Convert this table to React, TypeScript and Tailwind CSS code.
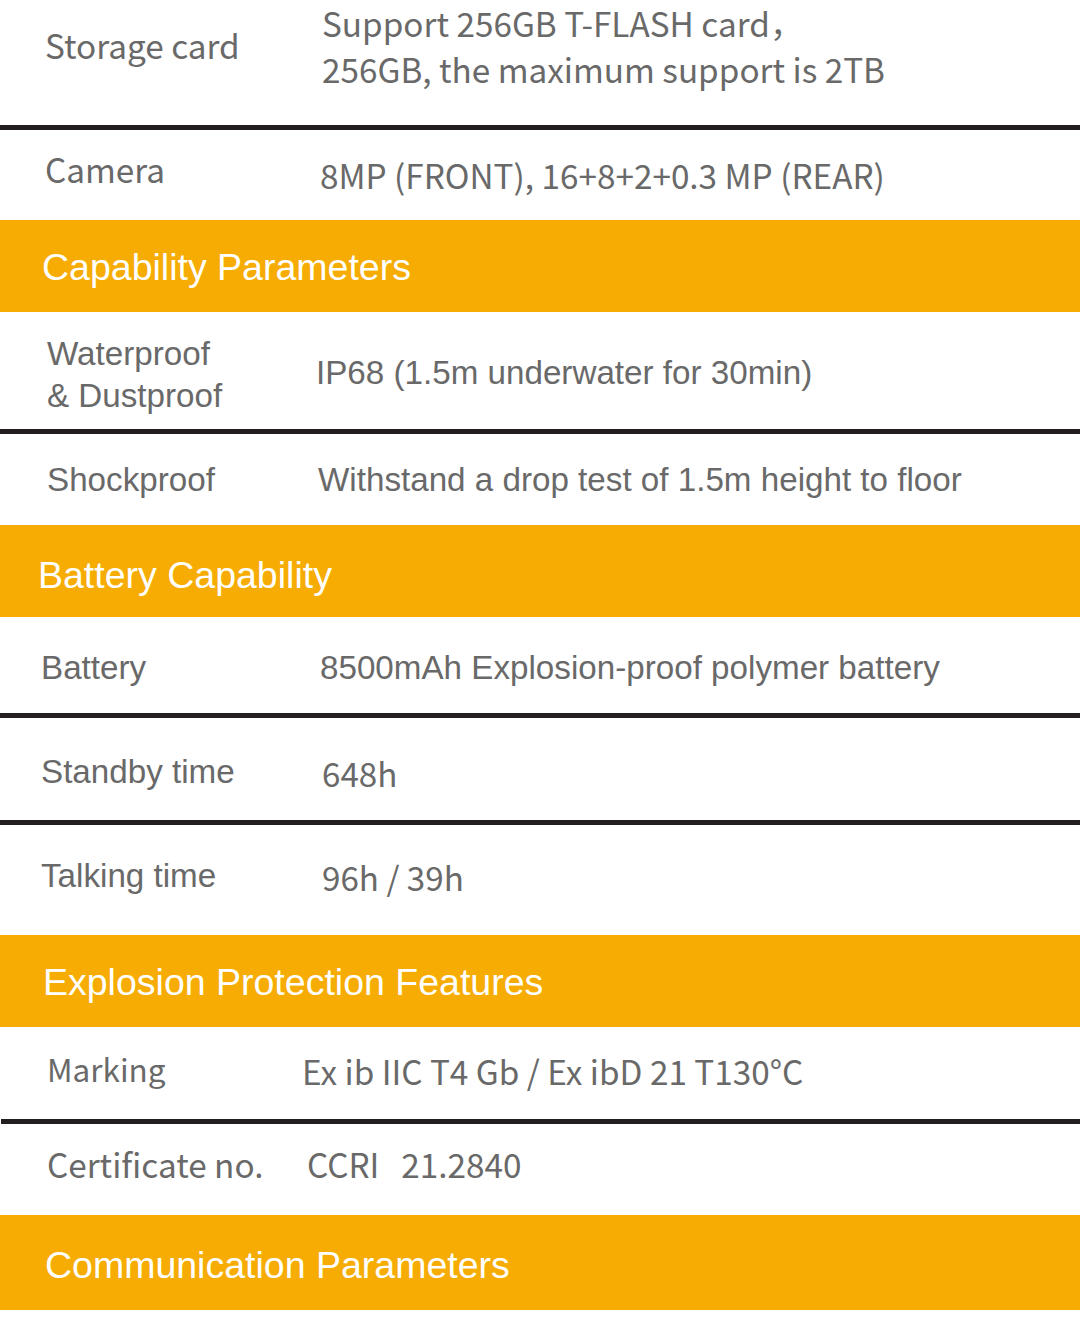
import React from 'react';

const cjk = "font-['Noto_Sans_CJK_SC','Noto_Sans',sans-serif]";
const arial = "font-['Liberation_Sans',Arial,sans-serif]";

type Row = {
  kind: 'row';
  h: string;
  font: string;
  size: string;
  label: React.ReactNode;
  value: React.ReactNode;
  labelCls: string;
  valueCls: string;
  line?: string;
};

type Header = {
  kind: 'header';
  h: string;
  title: string;
  cls: string;
};

const rows: (Row | Header)[] = [
  {
    kind: 'row',
    h: 'h-[125px]',
    font: cjk,
    size: 'text-[33.3px]',
    label: 'Storage card',
    value: (
      <>
        Support 256GB T-FLASH card，
        <br />
        256GB, the maximum support is 2TB
      </>
    ),
    labelCls: 'w-[322px] pl-[45px] pt-[25px]',
    valueCls: 'leading-[46px]',
    line: 'ml-0',
  },
  {
    kind: 'row',
    h: 'h-[90px]',
    font: cjk,
    size: 'text-[33.3px]',
    label: 'Camera',
    value: '8MP (FRONT), 16+8+2+0.3 MP (REAR)',
    labelCls: 'w-[320px] pl-[45px] pt-[19px]',
    valueCls: 'pt-[25px]',
  },
  { kind: 'header', h: 'h-[92px]', title: 'Capability Parameters', cls: 'pl-[42px] pt-[27px]' },
  {
    kind: 'row',
    h: 'h-[117px]',
    font: arial,
    size: 'text-[33.2px]',
    label: (
      <>
        Waterproof
        <br />& Dustproof
      </>
    ),
    value: 'IP68 (1.5m underwater for 30min)',
    labelCls: 'w-[316px] pl-[47px] pt-[21px] leading-[42px]',
    valueCls: 'pt-[41px]',
    line: 'ml-0',
  },
  {
    kind: 'row',
    h: 'h-[91px]',
    font: arial,
    size: 'text-[33.2px]',
    label: 'Shockproof',
    value: 'Withstand a drop test of 1.5m height to floor',
    labelCls: 'w-[318px] pl-[47px] pt-[26px]',
    valueCls: 'pt-[26px]',
  },
  { kind: 'header', h: 'h-[92px]', title: 'Battery Capability', cls: 'pl-[38px] pt-[30px]' },
  {
    kind: 'row',
    h: 'h-[96px]',
    font: arial,
    size: 'text-[33.2px]',
    label: 'Battery',
    value: '8500mAh Explosion-proof polymer battery',
    labelCls: 'w-[320px] pl-[41px] pt-[31px]',
    valueCls: 'pt-[31px]',
    line: 'ml-0',
  },
  {
    kind: 'row',
    h: 'h-[102px]',
    font: arial,
    size: 'text-[33.2px]',
    label: 'Standby time',
    value: <span className={cjk}>648h</span>,
    labelCls: 'w-[322px] pl-[41px] pt-[34px]',
    valueCls: 'pt-[35px]',
    line: 'ml-0',
  },
  {
    kind: 'row',
    h: 'h-[110px]',
    font: arial,
    size: 'text-[33.2px]',
    label: 'Talking time',
    value: <span className={cjk}>96h / 39h</span>,
    labelCls: 'w-[322px] pl-[41px] pt-[31px]',
    valueCls: 'pt-[32px]',
  },
  { kind: 'header', h: 'h-[92px]', title: 'Explosion Protection Features', cls: 'pl-[43px] pt-[27px]' },
  {
    kind: 'row',
    h: 'h-[92px]',
    font: cjk,
    size: 'text-[33.3px]',
    label: <span className="text-[31.5px]">Marking</span>,
    value: 'Ex ib IIC T4 Gb / Ex ibD 21 T130°C',
    labelCls: 'w-[302px] pl-[47px] pt-[21px]',
    valueCls: 'pt-[24px]',
    line: 'ml-[1px]',
  },
  {
    kind: 'row',
    h: 'h-[91px]',
    font: cjk,
    size: 'text-[33.3px]',
    label: 'Certificate no.',
    value: (
      <>
        CCRI<span className="inline-block w-[22px]" />21.2840
      </>
    ),
    labelCls: 'w-[307px] pl-[47px] pt-[20px]',
    valueCls: 'pt-[20px]',
  },
  { kind: 'header', h: 'h-[95px]', title: 'Communication Parameters', cls: 'pl-[45px] pt-[30px]' },
];

export default function App() {
  return (
    <div className="w-[1080px] h-[1327px] bg-white overflow-hidden">
      {rows.map((r, i) =>
        r.kind === 'header' ? (
          <div key={i} className={`${r.h} bg-[#f6ac02]`}>
            <div className={`${arial} ${r.cls} text-[37.5px] leading-[40px] text-white`}>{r.title}</div>
          </div>
        ) : (
          <div key={i}>
            <div className={`${r.h} ${r.font} ${r.size} flex items-start leading-[40px] text-[#696969]`}>
              <div className={`${r.labelCls} shrink-0`}>{r.label}</div>
              <div className={r.valueCls}>{r.value}</div>
            </div>
            {r.line && <div className={`${r.line} h-[5px] bg-[#231f20]`} />}
          </div>
        )
      )}
    </div>
  );
}
